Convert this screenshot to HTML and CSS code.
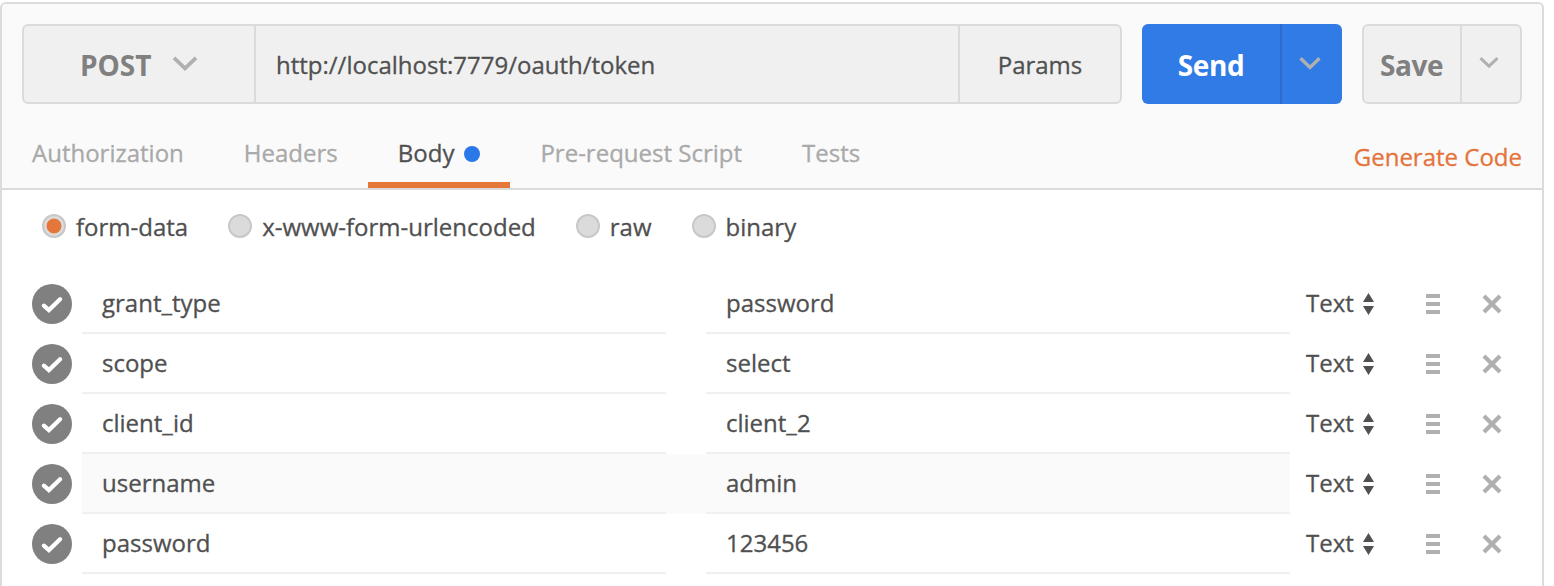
FILE: index.html
```html
<!DOCTYPE html>
<html lang="en">
<head>
<meta charset="utf-8">
<title>Request builder</title>
<link rel="stylesheet" href="styles.css">
</head>
<body>
<svg class="sprite" width="0" height="0">
  <symbol id="check" viewBox="0 0 40 40"><path d="M11.9 21.7 L16.9 26.1 L28.1 15.2" fill="none" stroke="#fff" stroke-width="4.2" stroke-linecap="round"/></symbol>
  <symbol id="sort" viewBox="0 0 12 22"><path d="M5.5 0 L11 9 H0Z M5.5 22 L11 13 H0Z" fill="#505050"/></symbol>
  <symbol id="bars" viewBox="0 0 14 20"><path d="M0 0H14V4H0Z M0 8H14V12H0Z M0 16H14V20H0Z" fill="#b0b0b0"/></symbol>
  <symbol id="close" viewBox="0 0 20 20"><path d="M2 2 L18 18 M18 2 L2 18" stroke="#b0b0b0" stroke-width="4.2"/></symbol>
</svg>
<main class="panel">
  <header class="head">
    <div class="toolbar">
      <div class="request">
        <div class="method"><span>POST</span><svg class="chev" width="26" height="16" viewBox="0 0 26 16"><path d="M2 1.8 L13 12.4 L24 1.8" fill="none" stroke="#b0b0b0" stroke-width="3.8"/></svg></div>
        <div class="url">http://localhost:7779/oauth/token</div>
        <div class="params">Params</div>
      </div>
      <div class="send">
        <div class="send-label">Send</div>
        <div class="send-more"><svg width="22" height="14" viewBox="0 0 22 14"><path d="M1.5 1.2 L11 10.4 L20.5 1.2" fill="none" stroke="#b0b0b0" stroke-width="3.4"/></svg></div>
      </div>
      <div class="save">
        <div class="save-label">Save</div>
        <div class="save-more"><svg width="20" height="12" viewBox="0 0 20 12"><path d="M1.5 1.2 L10 9.2 L18.5 1.2" fill="none" stroke="#b0b0b0" stroke-width="3"/></svg></div>
      </div>
    </div>
    <nav class="tabs">
      <div class="tab">Authorization</div>
      <div class="tab">Headers</div>
      <div class="tab active">Body<i class="dot"></i></div>
      <div class="tab">Pre-request Script</div>
      <div class="tab">Tests</div>
      <div class="generate">Generate Code</div>
    </nav>
  </header>
  <div class="modes">
    <div class="mode"><i class="radio on"></i>form-data</div>
    <div class="mode"><i class="radio"></i>x-www-form-urlencoded</div>
    <div class="mode"><i class="radio"></i>raw</div>
    <div class="mode"><i class="radio"></i>binary</div>
  </div>
  <div class="rows">
    <div class="row"><svg class="tick"><use href="#check"/></svg><div class="fields"><div class="cell">grant_type</div><div class="cell">password</div></div><div class="type">Text<svg class="sort"><use href="#sort"/></svg></div><svg class="bars"><use href="#bars"/></svg><svg class="close"><use href="#close"/></svg></div>
    <div class="row"><svg class="tick"><use href="#check"/></svg><div class="fields"><div class="cell">scope</div><div class="cell">select</div></div><div class="type">Text<svg class="sort"><use href="#sort"/></svg></div><svg class="bars"><use href="#bars"/></svg><svg class="close"><use href="#close"/></svg></div>
    <div class="row"><svg class="tick"><use href="#check"/></svg><div class="fields"><div class="cell">client_id</div><div class="cell">client_2</div></div><div class="type">Text<svg class="sort"><use href="#sort"/></svg></div><svg class="bars"><use href="#bars"/></svg><svg class="close"><use href="#close"/></svg></div>
    <div class="row"><svg class="tick"><use href="#check"/></svg><div class="fields hover"><div class="cell">username</div><div class="cell">admin</div></div><div class="type">Text<svg class="sort"><use href="#sort"/></svg></div><svg class="bars"><use href="#bars"/></svg><svg class="close"><use href="#close"/></svg></div>
    <div class="row"><svg class="tick"><use href="#check"/></svg><div class="fields"><div class="cell">password</div><div class="cell">123456</div></div><div class="type">Text<svg class="sort"><use href="#sort"/></svg></div><svg class="bars"><use href="#bars"/></svg><svg class="close"><use href="#close"/></svg></div>
  </div>
</main>
</body>
</html>
```
FILE: styles.css
```css
* { box-sizing: border-box; }
html, body { height: 100%; }
body {
  margin: 0;
  padding-top: 2px;
  overflow: hidden;
  background: #fff;
  color: #505050;
  font: 24px "Open Sans", "Noto Sans", sans-serif;
  -webkit-text-stroke: 0.3px currentColor;
}
svg { display: block; flex: none; }
.sprite { display: none; }

.panel {
  width: 1544px;
  height: 584px;
  border: 2px solid #dbdbdb;
  border-bottom: 0;
  border-radius: 6px 6px 0 0;
  overflow: hidden;
}
.head { background: #fafafa; border-bottom: 2px solid #dbdbdb; }
.toolbar { display: flex; gap: 20px; padding: 20px 20px 14px; }
.request, .save {
  display: flex;
  height: 80px;
  line-height: 76px;
  border: 2px solid #dbdbdb;
  border-radius: 6px;
  background: #f0f0f0;
}
.request { width: 1100px; line-height: 78px; }
.method {
  display: flex;
  width: 232px;
  padding-left: 56px;
  border-right: 2px solid #dbdbdb;
  color: #808080;
  font-size: 28px;
  font-weight: 700;
}
.method span { width: 92px; }
.method, .send-label, .save-label { -webkit-text-stroke-width: 0; }
.chev { margin-top: 30px; }
.url { flex: 1; padding-left: 20px; }
.params { width: 162px; text-align: center; border-left: 2px solid #dbdbdb; }
.send {
  display: flex;
  width: 200px;
  height: 80px;
  line-height: 83px;
  border-radius: 6px;
  background: #307be5;
  color: #fff;
}
.send-label, .save-label { font-size: 28px; font-weight: 700; letter-spacing: -0.4px; }
.send-label { width: 138px; text-align: center; }
.send-more { flex: 1; padding: 33px 0 0 17px; border-left: 2px solid #2b6dc9; }
.save { width: 160px; line-height: 79px; }
.save-label {
  width: 98px;
  padding-left: 16px;
  border-right: 2px solid #dbdbdb;
  color: #808080;
}
.save-more { padding: 31px 0 0 17px; }

.tabs { display: flex; height: 70px; line-height: 70px; color: #a9a9a9; }
.tab { padding: 0 30px; white-space: nowrap; }
.active { display: flex; align-items: center; color: #505050; box-shadow: inset 0 -6px #e5773a; }
.dot { width: 16px; height: 16px; margin: 2px 0 0 10px; border-radius: 50%; background: #2a77e8; }
.generate { margin-left: auto; padding: 4px 20px 0 0; color: #e5733c; }

.modes { display: flex; gap: 40px; padding: 14px 40px 0; height: 84px; line-height: 46px; }
.mode { display: flex; white-space: nowrap; }
.radio {
  width: 24px;
  height: 24px;
  margin: 10px 10px 0 0;
  border: 2px solid #c8c8c8;
  border-radius: 50%;
  background: #dbdbdb;
}
.on { background: radial-gradient(circle, #e5773a 7px, #dbdbdb 7.8px); }

.row { display: flex; height: 60px; padding-left: 30px; line-height: 58px; }
.tick { width: 40px; height: 40px; margin: 10px 10px 0 0; border-radius: 50%; background: #808080; }
.fields { display: flex; gap: 40px; width: 1208px; }
.hover { background: #fafafa; }
.cell { flex: 1; padding-left: 20px; border-bottom: 2px solid #f0f0f0; }
.type { display: flex; width: 136px; padding-left: 16px; }
.sort { width: 12px; height: 22px; margin: 19px 0 0 9px; }
.bars { width: 14px; height: 20px; margin-top: 20px; }
.close { width: 20px; height: 20px; margin: 20px 0 0 42px; }
```
